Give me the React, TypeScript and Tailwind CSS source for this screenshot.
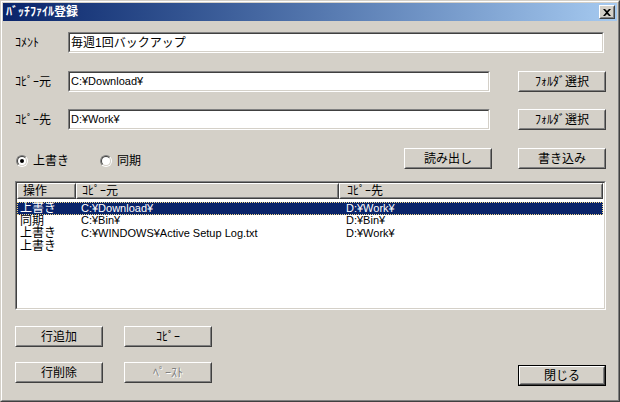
import React from "react";

const FONT = "font-['Liberation_Sans','Noto_Sans_CJK_JP',sans-serif]";

function Raised({ children, className = "", inner = "" }: { children?: React.ReactNode; className?: string; inner?: string }) {
  return (
    <div className={`border border-t-white border-l-white border-b-[#404040] border-r-[#404040] bg-[#d4d0c8] ${className}`}>
      <div className={`h-full w-full border border-t-[#d4d0c8] border-l-[#d4d0c8] border-b-[#808080] border-r-[#808080] ${inner}`}>{children}</div>
    </div>
  );
}

function Btn({ children, className = "", disabled = false, isDefault = false }: { children: React.ReactNode; className?: string; disabled?: boolean; isDefault?: boolean }) {
  const face = (
    <Raised className={isDefault ? "h-full w-full" : `h-[21px] w-[88px] ${className}`} inner="flex items-center justify-center">
      {disabled ? (
        <span className="text-[12px] leading-none text-[#808080] [text-shadow:1px_1px_0_#ffffff]">{children}</span>
      ) : (
        <span className="text-[12px] leading-none text-black">{children}</span>
      )}
    </Raised>
  );
  if (isDefault) {
    return <div className={`h-[21px] w-[88px] border border-black ${className}`}>{face}</div>;
  }
  return face;
}

function Sunken({ children, className = "" }: { children?: React.ReactNode; className?: string }) {
  return (
    <div className={`border border-t-[#808080] border-l-[#808080] border-b-white border-r-white ${className}`}>
      <div className="h-full w-full border border-t-[#404040] border-l-[#404040] border-b-[#d4d0c8] border-r-[#d4d0c8] bg-white">{children}</div>
    </div>
  );
}

function TextBox({ value, className = "", small = false }: { value: string; className?: string; small?: boolean }) {
  return (
    <Sunken className={`h-[21px] ${className}`}>
      <div className={`flex h-full items-center pl-[1px] leading-none text-black whitespace-nowrap ${small ? "text-[11px]" : "text-[12px]"}`}>{value}</div>
    </Sunken>
  );
}

function Radio({ checked, label }: { checked: boolean; label: string }) {
  return (
    <div className="flex items-center gap-[5px]">
      <div className="h-[12px] w-[12px] rounded-full border border-t-[#808080] border-l-[#808080] border-b-white border-r-white">
        <div className="flex h-full w-full items-center justify-center rounded-full border border-t-[#404040] border-l-[#404040] border-b-[#d4d0c8] border-r-[#d4d0c8] bg-white">
          {checked && <div className="h-[4px] w-[4px] rounded-full bg-black" />}
        </div>
      </div>
      <span className="text-[12px] leading-none text-black">{label}</span>
    </div>
  );
}

const rows = [
  { op: "上書き", src: "C:¥Download¥", dst: "D:¥Work¥" },
  { op: "同期", src: "C:¥Bin¥", dst: "D:¥Bin¥" },
  { op: "上書き", src: "C:¥WINDOWS¥Active Setup Log.txt", dst: "D:¥Work¥" },
  { op: "上書き", src: "", dst: "" },
];

export default function App() {
  return (
    <div className={`flex h-[402px] w-[620px] flex-col border border-t-[#d4d0c8] border-l-[#d4d0c8] border-b-[#404040] border-r-[#404040] bg-[#d4d0c8] ${FONT}`}>
      <div className="flex h-full w-full flex-col border border-t-white border-l-white border-b-[#808080] border-r-[#808080] p-[1px]">
        {/* Title bar */}
        <div className="flex h-[18px] items-center justify-between bg-gradient-to-r from-[#0a246a] to-[#a6caf0] pl-[3px] pr-[2px]">
          <span className="text-[12px] font-bold leading-none text-white">ﾊﾞｯﾁﾌｧｲﾙ登録</span>
          <Raised className="h-[14px] w-[16px]" inner="flex items-center justify-center">
            <svg width="8" height="7" viewBox="0 0 8 7">
              <path d="M0 0h2l2 2 2-2h2L5 3.5 8 7H6L4 5 2 7H0l3-3.5z" fill="black" />
            </svg>
          </Raised>
        </div>

        {/* Content */}
        <div className="flex flex-1 flex-col pl-[12px] pr-[11px]">
          <div className="mt-[11px] flex h-[21px] items-center">
            <span className="w-[53px] text-[12px] leading-none text-black">ｺﾒﾝﾄ</span>
            <TextBox value="毎週1回バックアップ" className="w-[536px]" />
          </div>

          <div className="mt-[18px] flex h-[21px] items-center">
            <span className="w-[53px] text-[12px] leading-none text-black">ｺﾋﾟｰ元</span>
            <TextBox value="C:¥Download¥" small className="w-[422px]" />
            <Btn className="ml-[28px]">ﾌｫﾙﾀﾞ選択</Btn>
          </div>

          <div className="mt-[17px] flex h-[21px] items-center">
            <span className="w-[53px] text-[12px] leading-none text-black">ｺﾋﾟｰ先</span>
            <TextBox value="D:¥Work¥" small className="w-[422px]" />
            <Btn className="ml-[28px]">ﾌｫﾙﾀﾞ選択</Btn>
          </div>

          <div className="mt-[18px] flex h-[21px] items-center">
            <div className="flex w-[389px] items-center gap-[31px] pl-[1px] pt-[5px]">
              <Radio checked label="上書き" />
              <Radio checked={false} label="同期" />
            </div>
            <Btn>読み出し</Btn>
            <Btn className="ml-[26px]">書き込み</Btn>
          </div>

          {/* List view */}
          <Sunken className="mt-[12px] h-[129px] w-[591px]">
            <div className="flex h-full flex-col">
              <div className="flex h-[16px] w-[586px]">
                <Raised className="h-full w-[59px]" inner="flex items-center pl-[4px]">
                  <span className="text-[12px] leading-none text-black">操作</span>
                </Raised>
                <Raised className="h-full w-[263px]" inner="flex items-center pl-[4px]">
                  <span className="text-[12px] leading-none text-black">ｺﾋﾟｰ元</span>
                </Raised>
                <Raised className="h-full w-[264px]" inner="flex items-center pl-[6px]">
                  <span className="text-[12px] leading-none text-black">ｺﾋﾟｰ先</span>
                </Raised>
              </div>
              <div className="mt-[3px] flex w-[586px] flex-col">
                {rows.map((r, i) => (
                  <div
                    key={i}
                    className={`flex h-[12.5px] items-center leading-none ${
                      i === 0 ? "bg-[#0a246a] text-white outline outline-1 outline-dotted outline-[#f2d98a] -outline-offset-1" : "text-black"
                    }`}
                  >
                    <span className="w-[64px] pl-[3px] text-[12px]">{r.op}</span>
                    <span className="w-[265px] whitespace-nowrap text-[11px]">{r.src}</span>
                    <span className="whitespace-nowrap text-[11px]">{r.dst}</span>
                  </div>
                ))}
              </div>
            </div>
          </Sunken>

          <div className="mt-[16px] flex">
            <div className="flex flex-col gap-[15px]">
              <div className="flex gap-[21px]">
                <Btn>行追加</Btn>
                <Btn>ｺﾋﾟｰ</Btn>
              </div>
              <div className="flex gap-[21px]">
                <Btn>行削除</Btn>
                <Btn disabled>ﾍﾟｰｽﾄ</Btn>
              </div>
            </div>
            <div className="ml-[306px] flex flex-col justify-end">
              <div className="mt-[39px]">
                <Btn isDefault>閉じる</Btn>
              </div>
            </div>
          </div>
        </div>
      </div>
    </div>
  );
}
